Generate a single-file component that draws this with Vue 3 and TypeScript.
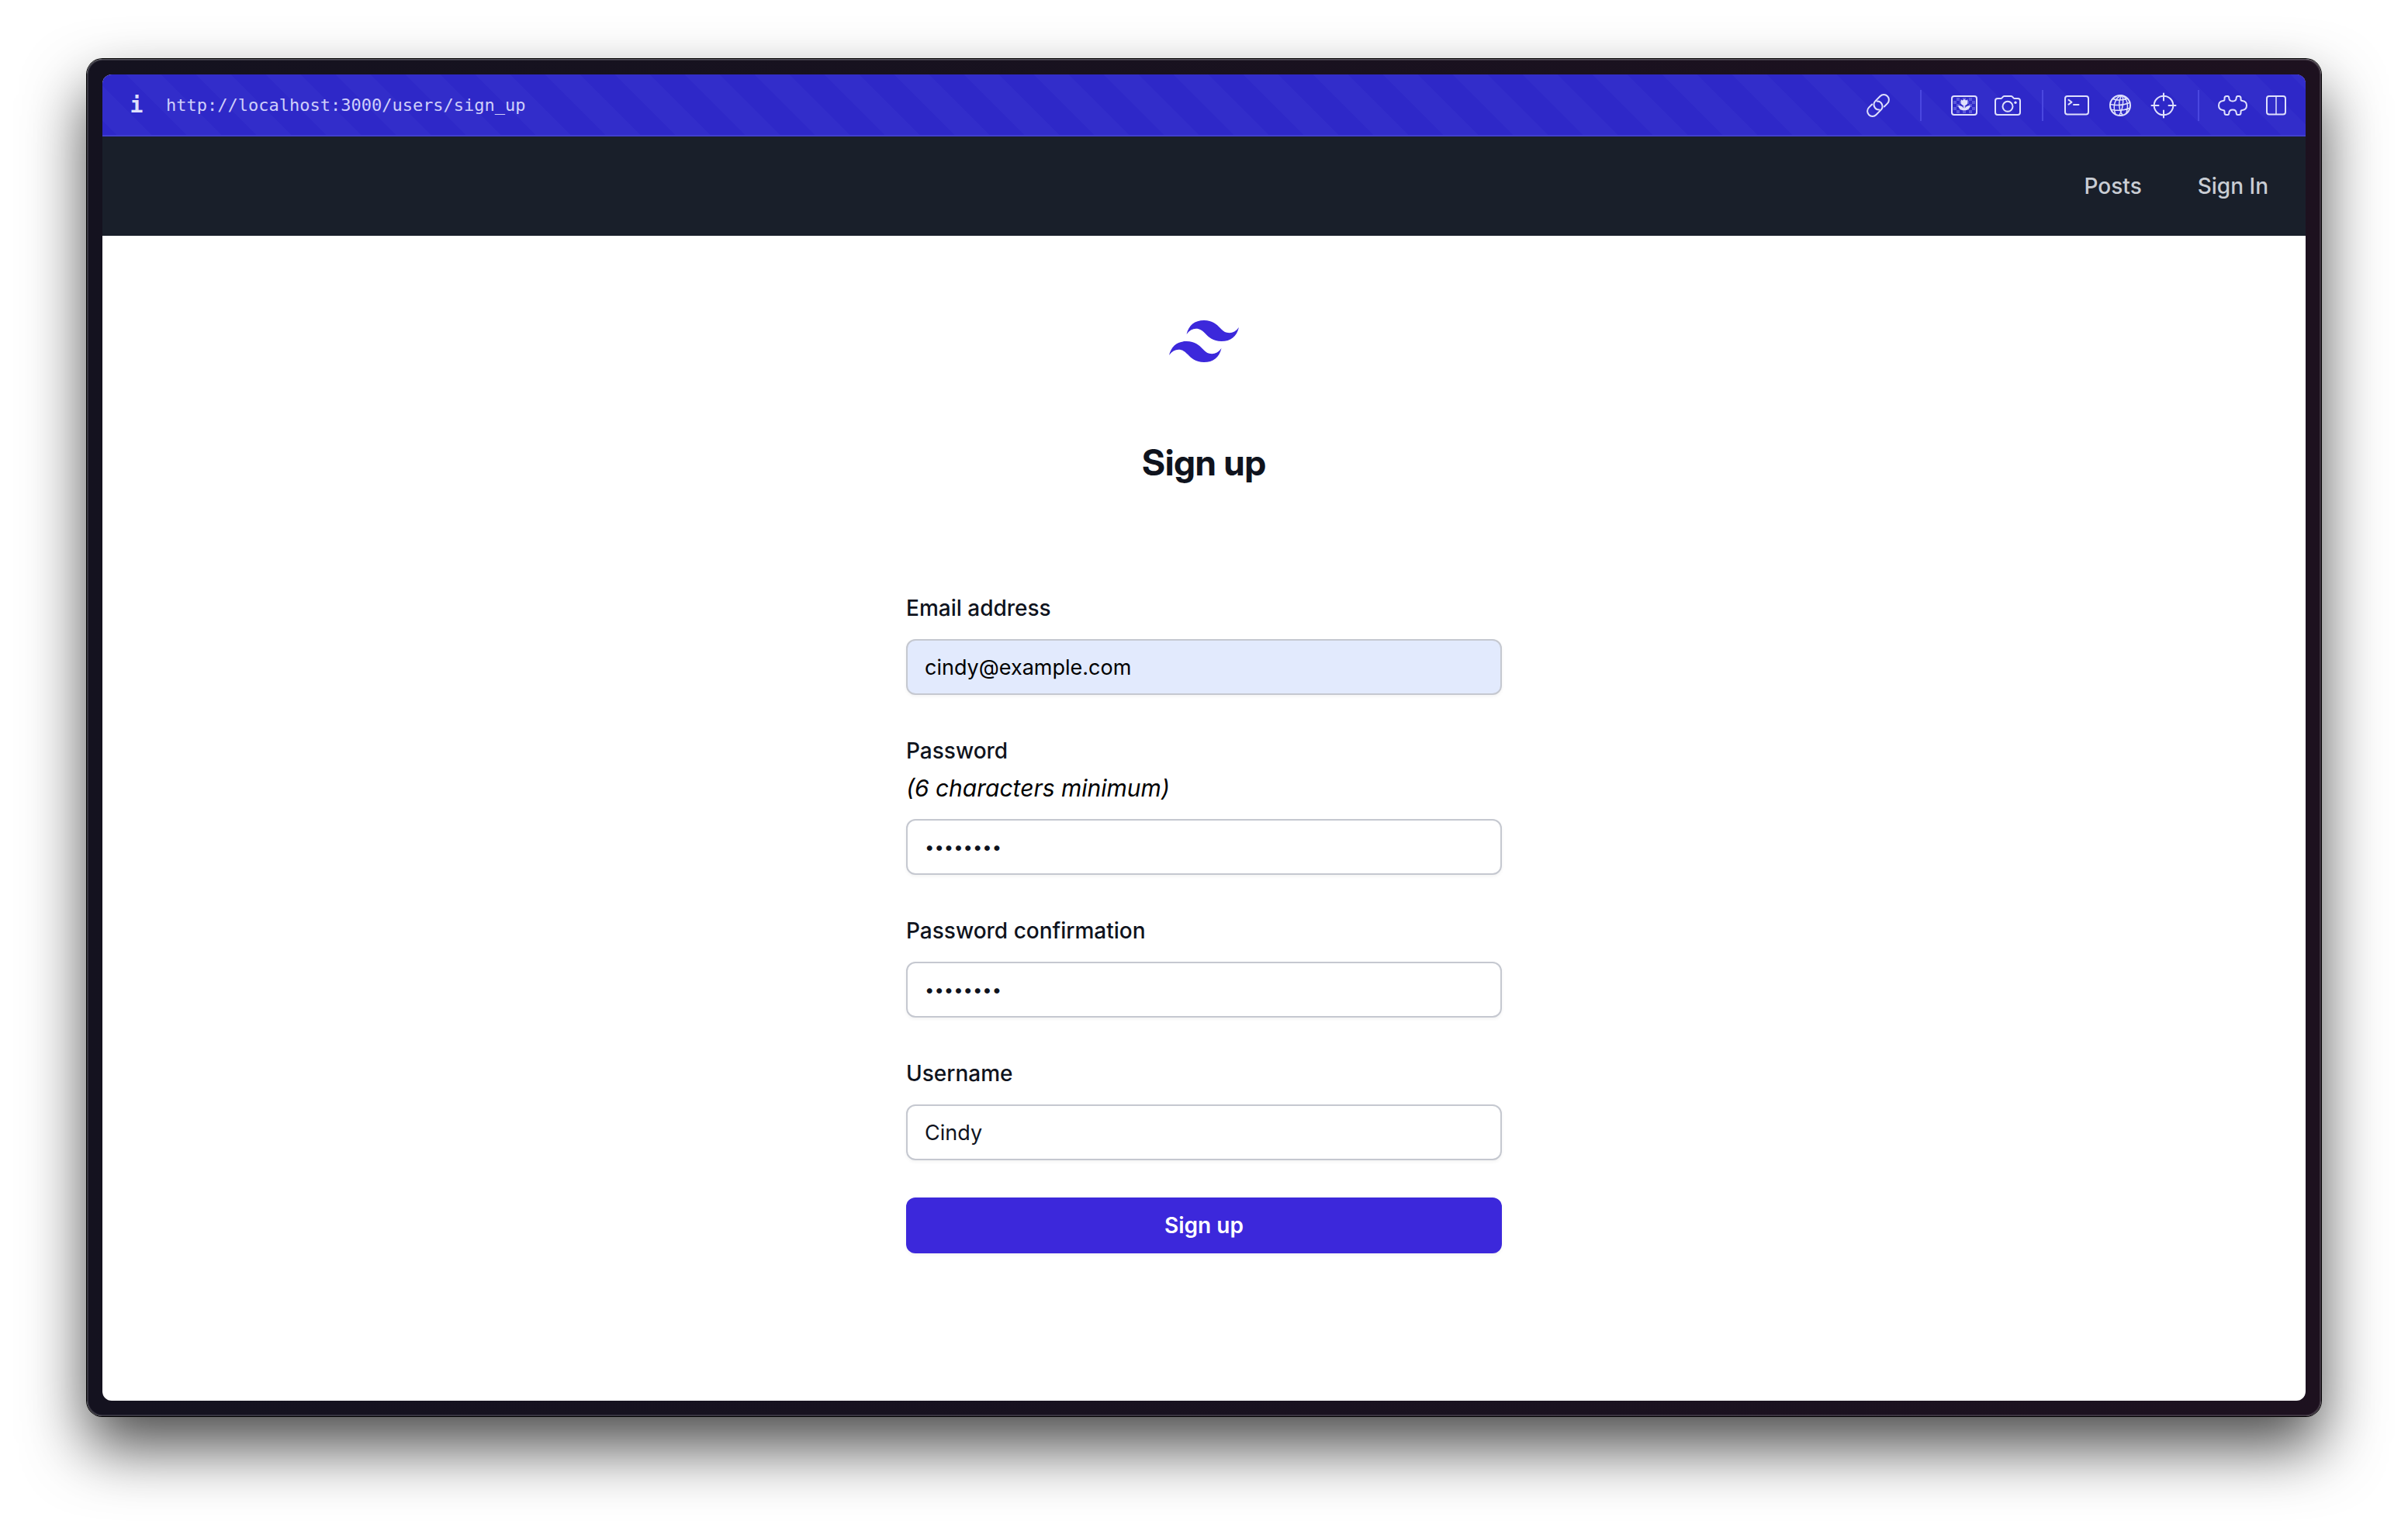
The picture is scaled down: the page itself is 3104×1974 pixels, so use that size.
<script setup lang="ts">
import { ref } from 'vue'

const address = ref('http://localhost:3000/users/sign_up')
const email = ref('cindy@example.com')
const password = ref('password')
const confirmation = ref('password')
const username = ref('Cindy')

// Squares of the transparency grid behind the tulip
const squares: { x: number; y: number }[] = []
for (let row = 0; row < 5; row++) {
  for (let col = 0; col < 7; col++) {
    if ((row + col) % 2 === 1) squares.push({ x: 3 + col * 4, y: 3 + row * 4 })
  }
}
</script>

<template>
  <div class="desktop">
    <div class="window">
      <div class="screen">
        <header class="toolbar">
          <button class="info" type="button" aria-label="Site information">i</button>
          <span class="address">{{ address }}</span>
          <div class="tools">
            <button class="tool" type="button" aria-label="Copy link">
              <svg width="30" height="30" viewBox="-15 -15 30 30">
                <g transform="rotate(-45)">
                  <path d="M4.5 6.6H10.300A6.600 6.600 0 0 0 10.300 -6.600H1.700A6.600 6.600 0 0 0 -2.800 4.900" />
                  <path d="M-4.5 -6.6H-10.300A6.600 6.600 0 0 0 -10.300 6.600H-1.700A6.600 6.600 0 0 0 2.800 -4.900" />
                </g>
              </svg>
            </button>
            <span class="divider wide"></span>
            <button class="tool" type="button" aria-label="Capture element">
              <svg width="34" height="26" viewBox="0 0 34 26">
                <rect v-for="s in squares" :key="s.x + '-' + s.y" class="square" :x="s.x" :y="s.y" width="4" height="4" />
                <rect x="1" y="1" width="32" height="24" rx="3" />
                <path class="solid" d="M12.700 5.300L14.800 6.500L17 4.700L19.200 6.500L21.300 5.300V9C21.300 11.200 20 12.700 17.800 12.900V16.500C19 14.300 21.500 13 24.800 13C24.400 17 21.500 19.300 17 19.300S9.600 17 9.200 13C12.500 13 15 14.300 16.200 16.500V12.900C14 12.700 12.700 11.200 12.700 9Z" />
              </svg>
            </button>
            <button class="tool" type="button" aria-label="Take screenshot">
              <svg width="34" height="26" viewBox="0 0 34 26">
                <path d="M4 4H8.500C10 4 10.500 1 12.500 1H21.500C23.500 1 24 4 25.500 4H30A3 3 0 0 1 33 7V22A3 3 0 0 1 30 25H4A3 3 0 0 1 1 22V7A3 3 0 0 1 4 4Z" />
                <circle cx="17" cy="14.300" r="6.500" />
                <circle class="solid" cx="27" cy="9.300" r="1.700" />
              </svg>
            </button>
            <span class="divider"></span>
            <button class="tool" type="button" aria-label="Console">
              <svg width="32" height="26" viewBox="0 0 32 26">
                <rect x="1" y="1" width="30" height="23.500" rx="3" />
                <path d="M5.500 5.800L9.500 8.700L5.500 11.600M12 12H18.500" />
              </svg>
            </button>
            <button class="tool" type="button" aria-label="Network">
              <svg width="28" height="28" viewBox="0 0 28 28">
                <circle cx="14" cy="14" r="13" />
                <path class="thin" d="M15 1C7 5 4 15 8 25.500M16 1C11.500 8 11.500 18 17 26.500M17 1.500C18.500 9 17.500 18 13 26.500M18 1.500C23.500 7 25 14 22 23.500M4.500 5.500C10 7.500 18 7 23.500 5M1 12.500C9 14 19 13.500 26.500 10.500M2.500 19.500C10 20.500 19 20.500 26 17.500" />
              </svg>
            </button>
            <button class="tool" type="button" aria-label="Inspect">
              <svg width="34" height="34" viewBox="0 0 34 34">
                <circle cx="17" cy="17" r="12.300" />
                <path d="M17 1.500V10.500M17 23.500V32.500M1.500 17H10.500M23.500 17H32.500" />
              </svg>
            </button>
            <span class="divider"></span>
            <button class="tool" type="button" aria-label="Extensions">
              <svg width="38" height="26" viewBox="0 0 38 26">
                <path d="M11 1H12.500C14 1 14.300 2 14.300 3.500C14.500 6 16.500 7.500 19 7.500S23.500 6 23.700 3.500C23.700 2 24 1 25.500 1H27C28.600 1 29.500 2 29.500 3.500V5C29.500 6.300 30.300 7 31.500 7C35 7.500 37 10 37 13S35 18.500 31.500 19C30.300 19 29.500 19.700 29.500 21V22.500C29.500 24 28.600 25 27 25H25.500C24 25 23.700 24 23.700 22.500C23.500 20 21.500 18.500 19 18.500S14.500 20 14.300 22.500C14.300 24 14 25 12.500 25H11C9.400 25 8.500 24 8.500 22.500V21C8.500 19.700 7.700 19 6.500 19C3 18.500 1 16 1 13S3 7.500 6.500 7C7.700 7 8.500 6.300 8.500 5V3.500C8.500 2 9.400 1 11 1Z" />
              </svg>
            </button>
            <button class="tool" type="button" aria-label="Split view">
              <svg width="26" height="26" viewBox="0 0 26 26">
                <rect x="1" y="1" width="24" height="23.500" rx="3" />
                <path class="thin" d="M13 1V24" />
              </svg>
            </button>
          </div>
        </header>

        <nav class="nav">
          <a href="#posts">Posts</a>
          <a href="#sign-in">Sign In</a>
        </nav>

        <main class="page">
          <svg class="logo" viewBox="0 0 54 32.400" role="img" aria-label="Logo">
            <path d="M27 0c-7.200 0-11.700 3.600-13.500 10.800 2.700-3.600 5.850-4.950 9.450-4.050 2.054.513 3.522 2.004 5.147 3.653C30.744 13.090 33.808 16.200 40.500 16.200c7.200 0 11.700-3.600 13.500-10.800-2.700 3.600-5.850 4.950-9.450 4.050-2.054-.513-3.522-2.004-5.147-3.653C36.756 3.110 33.692 0 27 0zM13.500 16.200C6.300 16.200 1.800 19.800 0 27c2.700-3.600 5.850-4.950 9.450-4.050 2.054.514 3.522 2.004 5.147 3.653C17.244 29.290 20.308 32.400 27 32.400c7.200 0 11.700-3.600 13.500-10.800-2.700 3.600-5.850 4.950-9.450 4.050-2.054-.513-3.522-2.004-5.147-3.653C23.256 19.310 20.192 16.200 13.500 16.200z" />
          </svg>
          <h1>Sign up</h1>
          <form class="form" @submit.prevent>
            <div class="field">
              <label for="email">Email address</label>
              <input id="email" v-model="email" class="filled" type="email" />
            </div>
            <div class="field">
              <label for="password">Password</label>
              <em>(6 characters minimum)</em>
              <input id="password" v-model="password" type="password" />
            </div>
            <div class="field">
              <label for="confirmation">Password confirmation</label>
              <input id="confirmation" v-model="confirmation" type="password" />
            </div>
            <div class="field">
              <label for="username">Username</label>
              <input id="username" v-model="username" type="text" />
            </div>
            <button class="submit" type="submit">Sign up</button>
          </form>
        </main>
      </div>
    </div>
  </div>
</template>

<style>
body {
  background: #fff;
}
</style>

<style scoped>
.desktop {
  display: flex;
  box-sizing: border-box;
  min-height: 100vh;
  padding: 76px 112px 148px;
  font-family: Inter, 'Liberation Sans', sans-serif;
  overflow: hidden;
}

.window {
  display: flex;
  flex: 1;
  min-width: 0;
  padding: 20px;
  border-radius: 20px;
  background: linear-gradient(90deg, #14121f, #1d111f);
  box-shadow:
    inset 0 1px 0 rgba(255, 255, 255, 0.14),
    inset 0 0 0 2px rgba(255, 255, 255, 0.15),
    0 0 0 1px #000,
    0 40px 80px rgba(0, 0, 0, 0.7);
}

.screen {
  display: flex;
  flex: 1;
  flex-direction: column;
  min-width: 0;
  border-radius: 12px;
  background: #fff;
  overflow: hidden;
}

.toolbar {
  display: flex;
  align-items: center;
  box-sizing: border-box;
  height: 80px;
  padding: 2px 10px 0 16px;
  border-bottom: 2px solid #413fcf;
  background:
    linear-gradient(
        45deg,
        #322dca 25%,
        transparent 25%,
        transparent 50%,
        #322dca 50%,
        #322dca 75%,
        transparent 75%
      )
      31px 0 / 90px 90px,
    #2e28c8;
}

.info,
.tool {
  display: flex;
  align-items: center;
  justify-content: center;
  width: 56px;
  height: 56px;
  padding: 0;
  border: 0;
  background: none;
  color: #dfe0fc;
}

.info {
  font: bold 28px/56px 'DejaVu Sans Mono', monospace;
}

.address {
  flex: 1;
  padding-left: 10px;
  color: #cfcffa;
  font: 22px/40px 'DejaVu Sans Mono', monospace;
}

.tools {
  display: flex;
  align-items: center;
}

.tool svg {
  fill: none;
  stroke: currentColor;
  stroke-width: 2;
  stroke-linecap: round;
  stroke-linejoin: round;
}

.tool .solid {
  fill: currentColor;
  stroke: none;
}

.tool .square {
  fill: #5b58dc;
  stroke: none;
}

.tool .thin {
  stroke-width: 1.5;
}

.divider {
  width: 2px;
  height: 40px;
  margin: 0 15px 0 16px;
  background: #4a47df;
}

.divider.wide {
  margin: 0 27px 0 26px;
}

.nav {
  display: flex;
  align-items: center;
  justify-content: flex-end;
  gap: 72px;
  height: 128px;
  padding: 0 48px;
  background: #191f2a;
}

.nav a {
  color: #c9cdd4;
  font-size: 28px;
  font-weight: 500;
  line-height: 40px;
  text-decoration: none;
}

.page {
  display: flex;
  flex-direction: column;
  align-items: center;
  padding: 96px 48px;
}

.logo {
  width: 90px;
  height: 80px;
  fill: #3c28db;
}

h1 {
  margin: 80px 0 128px;
  color: #0f131d;
  font-family: 'Inter Display', Inter, 'Liberation Sans', sans-serif;
  font-size: 46px;
  font-weight: 700;
  line-height: 72px;
}

.form {
  display: flex;
  flex-direction: column;
  gap: 48px;
  width: 100%;
  max-width: 768px;
}

.field {
  display: flex;
  flex-direction: column;
}

label {
  color: #0f131d;
  font-size: 28px;
  font-weight: 500;
  line-height: 48px;
}

em {
  color: #000;
  font-size: 30px;
  line-height: 48px;
}

input {
  box-sizing: border-box;
  height: 72px;
  margin: 16px 0 0;
  padding: 0 22px;
  border: 2px solid #c5c8d0;
  border-radius: 12px;
  background: #fff;
  box-shadow: 0 2px 4px rgba(0, 0, 0, 0.05);
  color: #0f131d;
  font: 27px/48px Inter, 'Liberation Sans', sans-serif;
}

input[type='password'] {
  font-size: 22px;
}

input.filled {
  background: #e2eafd;
  color: #000;
}

.submit {
  height: 72px;
  padding: 0 24px;
  border: 0;
  border-radius: 12px;
  background: #3c28db;
  box-shadow: 0 2px 4px rgba(0, 0, 0, 0.05);
  color: #fff;
  font: 600 28px/48px Inter, 'Liberation Sans', sans-serif;
}
</style>
